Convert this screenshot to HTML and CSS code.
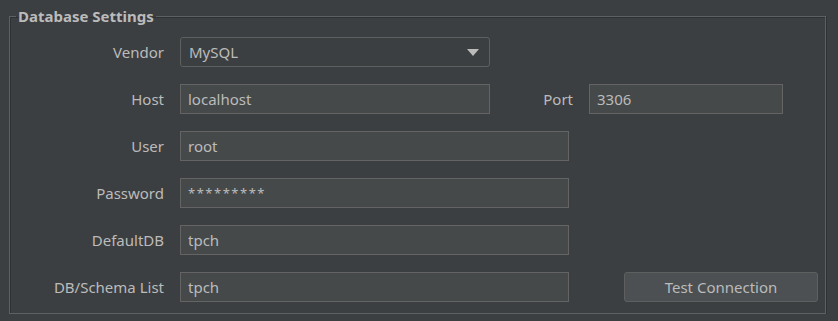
FILE: index.html
```html
<!DOCTYPE html>
<html lang="en">
<head>
    <meta charset="UTF-8">
    <meta name="viewport" content="width=device-width, initial-scale=1.0">
    <title>Database Settings</title>
    <link rel="stylesheet" href="styles.css">
</head>
<body>
    <fieldset class="settings-group">
        <legend>Database Settings</legend>

        <div class="form-row">
            <label class="field-label" for="vendor">Vendor</label>
            <div class="combo-box" id="vendor">
                <span>MySQL</span>
                <span class="combo-arrow"></span>
            </div>
        </div>

        <div class="form-row">
            <label class="field-label" for="host">Host</label>
            <input class="text-field host-field" type="text" id="host" value="localhost">
            <label class="port-label" for="port">Port</label>
            <input class="text-field port-field" type="text" id="port" value="3306">
        </div>

        <div class="form-row">
            <label class="field-label" for="user">User</label>
            <input class="text-field wide-field" type="text" id="user" value="root">
        </div>

        <div class="form-row">
            <label class="field-label" for="password">Password</label>
            <input class="text-field wide-field password-field" type="text" id="password" value="*********">
        </div>

        <div class="form-row">
            <label class="field-label" for="defaultDb">DefaultDB</label>
            <input class="text-field wide-field" type="text" id="defaultDb" value="tpch">
        </div>

        <div class="form-row">
            <label class="field-label" for="schemaList">DB/Schema List</label>
            <input class="text-field wide-field" type="text" id="schemaList" value="tpch">
            <button class="test-button">Test Connection</button>
        </div>
    </fieldset>
</body>
</html>
```

FILE: styles.css
```css
body {
    background-color: #3c3f41; /* Darcula panel */
    color: #bbbbbb;
    font-family: 'Noto Sans', 'Open Sans', sans-serif;
    font-size: 15px;
    margin: 0;
    padding: 6px 12px 0 9px;
}

.settings-group {
    margin: 0;
    padding: 11px 0 11px 0;
    border: 1px solid #5e6163;
    box-shadow: 1px 1px 0 #2f3133, inset 1px 1px 0 #2f3133;
    display: flex;
    flex-direction: column;
    gap: 17px;
}

legend {
    font-weight: bold;
    font-size: 15px;
    padding: 0 2px;
    margin-left: 6px;
    color: #bbbbbb;
}

.form-row {
    display: flex;
    align-items: center;
    height: 30px;
}

.field-label {
    width: 154px;
    text-align: right;
    margin-right: 16px;
}

.text-field {
    height: 30px;
    box-sizing: border-box;
    padding: 0 7px;
    background-color: #45494a;
    border: 1px solid #646464;
    color: #bbbbbb;
    font-family: inherit;
    font-size: 15px;
    outline: none;
}

.host-field {
    width: 310px;
}

.port-label {
    width: 83px;
    text-align: right;
    margin-right: 16px;
}

.port-field {
    width: 194px;
}

.wide-field {
    width: 389px;
}

/* Masked password text is smaller and more spread out */
.password-field {
    font-size: 13px;
    letter-spacing: 1.5px;
}

.combo-box {
    width: 310px;
    height: 30px;
    box-sizing: border-box;
    padding: 0 8px;
    display: flex;
    align-items: center;
    justify-content: space-between;
    background-color: #3c3f41;
    border: 1px solid #5e6060;
    border-radius: 3px;
}

/* Small filled triangle on the right of the combo */
.combo-arrow {
    width: 0;
    height: 0;
    margin-right: 2px;
    border-left: 6px solid transparent;
    border-right: 6px solid transparent;
    border-top: 7px solid #bbbbbb;
}

.test-button {
    margin-left: 55px;
    width: 194px;
    height: 30px;
    background-color: #4c5052;
    border: 1px solid #5e6060;
    border-radius: 3px;
    color: #bbbbbb;
    font-family: inherit;
    font-size: 15px;
}
```
